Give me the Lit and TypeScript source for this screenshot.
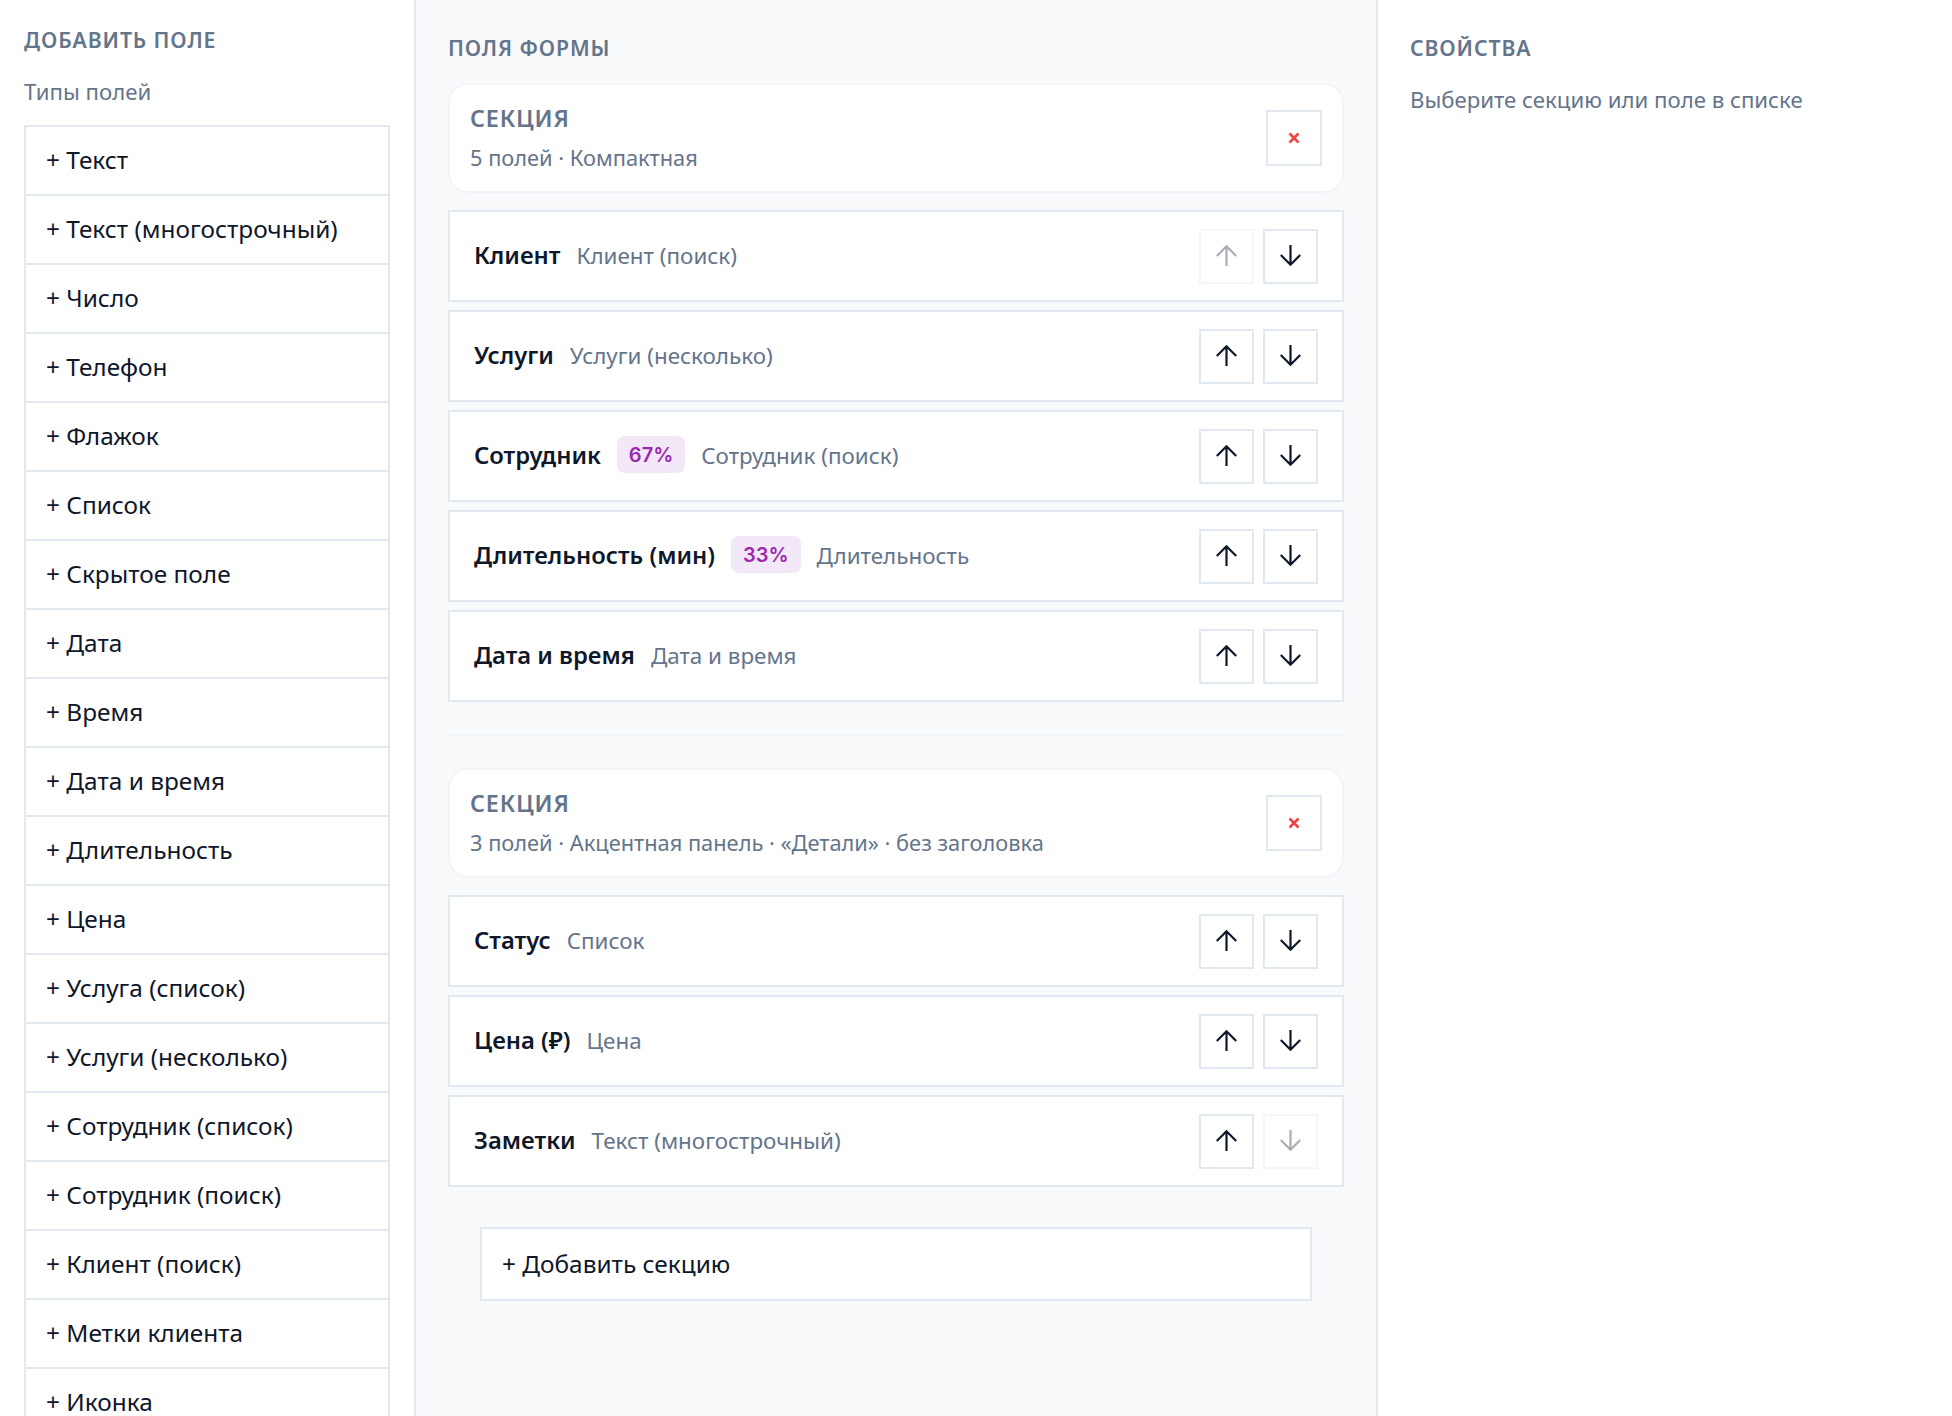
import { LitElement, html, css, svg } from 'lit';
import { customElement } from 'lit/decorators.js';

const FIELD_TYPES = [
  'Текст', 'Текст (многострочный)', 'Число', 'Телефон', 'Флажок', 'Список',
  'Скрытое поле', 'Дата', 'Время', 'Дата и время', 'Длительность', 'Цена',
  'Услуга (список)', 'Услуги (несколько)', 'Сотрудник (список)',
  'Сотрудник (поиск)', 'Клиент (поиск)', 'Метки клиента', 'Иконка',
];

interface Field { label: string; type: string; pct?: string; }
interface Section { meta: string; fields: Field[]; }

const SECTIONS: Section[] = [
  {
    meta: '5 полей · Компактная',
    fields: [
      { label: 'Клиент', type: 'Клиент (поиск)' },
      { label: 'Услуги', type: 'Услуги (несколько)' },
      { label: 'Сотрудник', type: 'Сотрудник (поиск)', pct: '67%' },
      { label: 'Длительность (мин)', type: 'Длительность', pct: '33%' },
      { label: 'Дата и время', type: 'Дата и время' },
    ],
  },
  {
    meta: '3 полей · Акцентная панель · «Детали» · без заголовка',
    fields: [
      { label: 'Статус', type: 'Список' },
      { label: 'Цена (₽)', type: 'Цена' },
      { label: 'Заметки', type: 'Текст (многострочный)' },
    ],
  },
];

const arrowUp = svg`<path d="M10.500 21V1.500M.8 11l9.700-9.700 9.700 9.700"/>`;
const arrowDown = svg`<path d="M10.500 0v19.500M.8 10l9.700 9.700 9.700-9.700"/>`;

@customElement('app-root')
export class AppRoot extends LitElement {
  static styles = css`
    :host {
      display: block;
      height: 100vh;
      overflow: hidden;
      font-family: "Noto Sans", sans-serif;
      color: #0f172a;
      background: #fff;
    }
    .layout {
      display: grid;
      grid-template-columns: 416px 962px 1fr;
      height: 1416px;
    }
    .left {
      padding: 24px 24px 0;
      border-right: 2px solid #e2e8f0;
      overflow: hidden;
    }
    .middle {
      padding: 32px 32px 0;
      background: #f8fafc;
      border-right: 2px solid #e2e8f0;
      overflow: hidden;
    }
    .right { padding: 32px; }
    h2 {
      margin: 0;
      font-size: 21.2px;
      line-height: 32px;
      font-weight: 600;
      letter-spacing: 0.9px;
      color: #64748b;
      text-transform: uppercase;
    }
    .hint {
      margin: 20px 0 0;
      font-size: 22.2px;
      line-height: 32px;
      color: #64748b;
    }
    .types {
      margin-top: 17px;
      display: flex;
      flex-direction: column;
    }
    .type {
      height: 71px;
      margin-bottom: -2px;
      box-sizing: border-box;
      display: flex;
      align-items: center;
      padding: 0 20px 2px;
      border: 2px solid #e2e8f0;
      background: #fff;
      font-size: 24.4px;
    }
    .middle h2 { margin-bottom: 19px; }
    .head {
      height: 110px;
      box-sizing: border-box;
      display: flex;
      align-items: center;
      justify-content: space-between;
      padding: 0 20px;
      background: #fff;
      border: 2px solid #f1f5f9;
      border-radius: 20px;
      margin-bottom: 17px;
    }
    .head b {
      display: block;
      font-size: 23.2px;
      line-height: 32px;
      font-weight: 600;
      letter-spacing: 0.9px;
      color: #64748b;
    }
    .head span {
      display: block;
      margin-top: 8px;
      font-size: 21.8px;
      line-height: 32px;
      color: #64748b;
    }
    .rows { display: flex; flex-direction: column; gap: 8px; }
    .row {
      height: 92px;
      box-sizing: border-box;
      display: flex;
      align-items: center;
      gap: 16px;
      padding: 0 24px;
      background: #fff;
      border: 2px solid #e2e8f0;
    }
    .name { font-size: 23.8px; font-weight: 600; line-height: 32px; margin-bottom: 2px; }
    .kind { font-size: 22.4px; line-height: 32px; color: #64748b; margin-bottom: 1px; }
    .pct {
      height: 37px;
      margin-bottom: 3px;
      padding: 0 12px;
      display: flex;
      align-items: center;
      border-radius: 8px;
      background: #f3e8f7;
      color: #9c27b0;
      font-family: Inter, sans-serif;
      font-size: 20px;
      font-weight: 600;
    }
    .btns { margin-left: auto; display: flex; gap: 9px; }
    .btn {
      width: 55px;
      height: 55px;
      box-sizing: border-box;
      display: flex;
      align-items: center;
      justify-content: center;
      border: 2px solid #e2e8f0;
      background: #fff;
      padding: 0;
      color: #0f172a;
    }
    .btn.off { opacity: 0.35; }
    .btn svg { fill: none; stroke: currentColor; stroke-width: 2.2; }
    .del { width: 56px; height: 56px; color: #ef4444; }
    .del svg { stroke-width: 2.6; }
    hr {
      border: 0;
      border-top: 2px solid #f1f5f9;
      margin: 32px 0;
    }
    .add {
      margin: 40px 32px 0;
      height: 74px;
      box-sizing: border-box;
      display: flex;
      align-items: center;
      padding: 0 20px 2px;
      background: #fff;
      border: 2px solid #e2e8f0;
      font-size: 24.4px;
    }
  `;

  private renderSection(s: Section, si: number) {
    const last = SECTIONS.length - 1;
    return html`
      ${si > 0 ? html`<hr />` : ''}
      <div class="head">
        <div><b>СЕКЦИЯ</b><span>${s.meta}</span></div>
        <div class="btn del">
          <svg width="12" height="12" viewBox="0 0 12 12"><path d="M1.500 1.500l9 9M10.500 1.500l-9 9"/></svg>
        </div>
      </div>
      <div class="rows">
        ${s.fields.map((f, i) => html`
          <div class="row">
            <span class="name">${f.label}</span>
            ${f.pct ? html`<span class="pct">${f.pct}</span>` : ''}
            <span class="kind">${f.type}</span>
            <div class="btns">
              <div class="btn ${si === 0 && i === 0 ? 'off' : ''}">
                <svg width="21" height="22" viewBox="0 0 21 22">${arrowUp}</svg>
              </div>
              <div class="btn ${si === last && i === s.fields.length - 1 ? 'off' : ''}">
                <svg width="21" height="22" viewBox="0 0 21 22">${arrowDown}</svg>
              </div>
            </div>
          </div>
        `)}
      </div>
    `;
  }

  render() {
    return html`
      <div class="layout">
        <aside class="left">
          <h2>Добавить поле</h2>
          <p class="hint">Типы полей</p>
          <div class="types">
            ${FIELD_TYPES.map((t) => html`<div class="type">+ ${t}</div>`)}
          </div>
        </aside>
        <main class="middle">
          <h2>Поля формы</h2>
          ${SECTIONS.map((s, i) => this.renderSection(s, i))}
          <div class="add">+ Добавить секцию</div>
        </main>
        <aside class="right">
          <h2>Свойства</h2>
          <p class="hint">Выберите секцию или поле в списке</p>
        </aside>
      </div>
    `;
  }
}
